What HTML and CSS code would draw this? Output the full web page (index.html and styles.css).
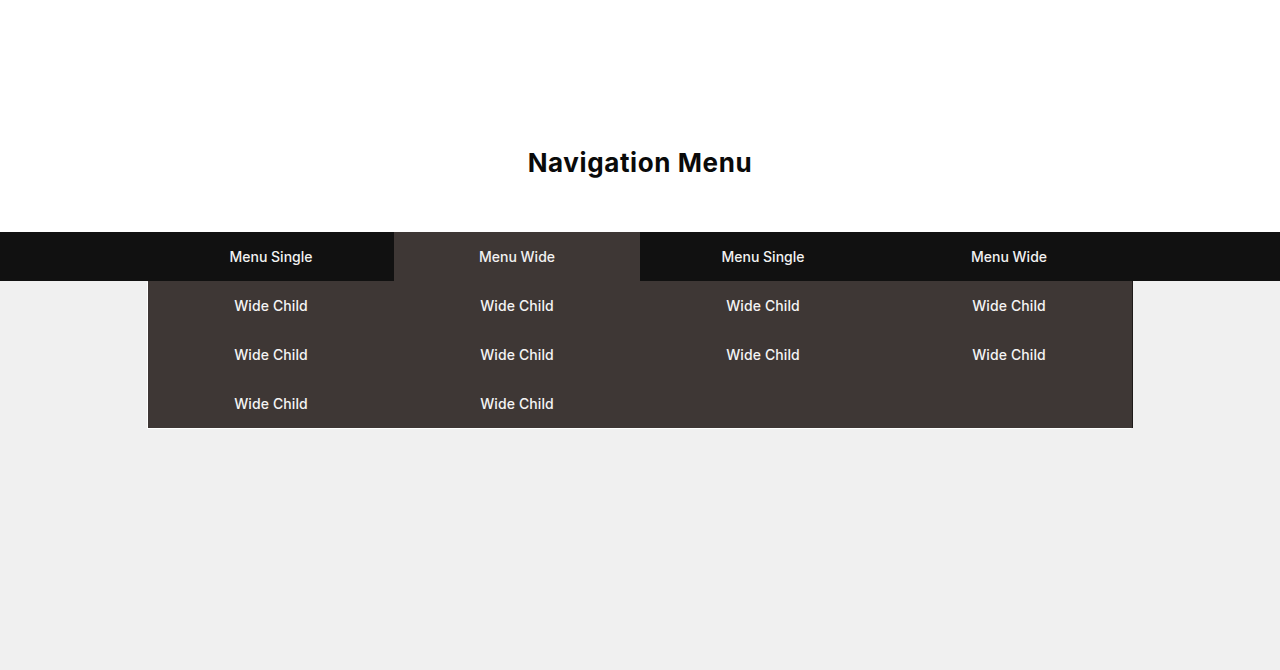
FILE: index.html
```html
<!DOCTYPE html>
<html lang="en">
<head>
<meta charset="utf-8">
<title>Navigation Menu</title>
<link rel="stylesheet" href="styles.css">
</head>
<body>
<header class="hero">
  <h1 class="title">Navigation Menu</h1>
</header>
<nav class="navbar">
  <ul class="menu">
    <li class="menu-item">Menu Single</li>
    <li class="menu-item active">Menu Wide
      <div class="dropdown">
        <span class="child">Wide Child</span>
        <span class="child">Wide Child</span>
        <span class="child">Wide Child</span>
        <span class="child">Wide Child</span>
        <span class="child">Wide Child</span>
        <span class="child">Wide Child</span>
        <span class="child">Wide Child</span>
        <span class="child">Wide Child</span>
        <span class="child">Wide Child</span>
        <span class="child">Wide Child</span>
      </div>
    </li>
    <li class="menu-item">Menu Single</li>
    <li class="menu-item">Menu Wide</li>
  </ul>
</nav>
</body>
</html>
```

FILE: styles.css
```css
html, body {
  margin: 0;
  padding: 0;
}
body {
  background: #f0f0f0;
  font-family: "Inter", "Noto Sans", sans-serif;
  min-height: 670px;
}
.hero {
  background: #ffffff;
  height: 232px;
  display: flex;
  justify-content: center;
  align-items: flex-start;
}
.title {
  margin: 145px 0 0;
  font-size: 26px;
  line-height: 36px;
  font-weight: 700;
  color: #0a0a0a;
  letter-spacing: 0.6px;
}
.navbar {
  background: #111111;
}
.menu {
  list-style: none;
  margin: 0 auto;
  padding: 0;
  width: 984px;
  display: grid;
  grid-template-columns: repeat(4, 1fr);
  position: relative;
}
.menu-item {
  height: 49px;
  display: flex;
  align-items: center;
  justify-content: center;
  color: #f2f2f2;
  font-size: 14px;
  font-weight: 500;
}
.menu-item.active {
  background: #3e3735;
}
.dropdown {
  position: absolute;
  top: 49px;
  left: 0;
  width: 984px;
  background: #3e3735;
  display: grid;
  grid-template-columns: repeat(4, 1fr);
  grid-auto-rows: 49px;
  box-shadow: -1px 1px 0 #ffffff, 1px 0 0 #1e1a19;
}
.child {
  display: flex;
  align-items: center;
  justify-content: center;
  color: #f4f4f4;
  font-size: 14px;
  font-weight: 500;
  letter-spacing: 0.1px;
}
```
